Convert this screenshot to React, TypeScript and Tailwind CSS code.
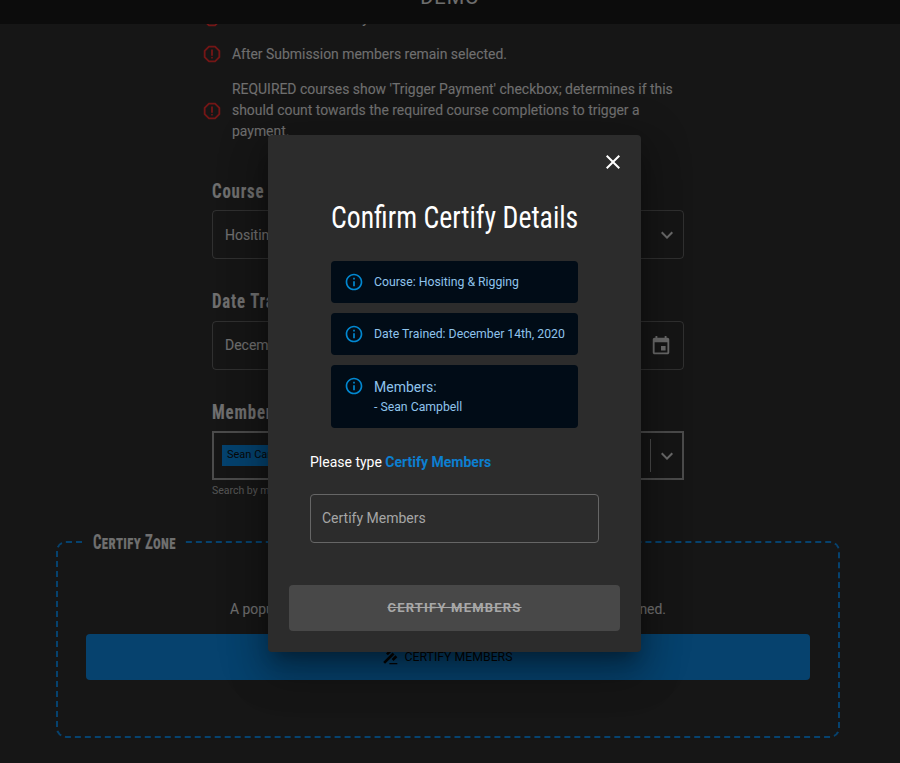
import React from "react";

const ROBOTO = "font-['Roboto',sans-serif]";
const CONDENSED = "font-['Liberation_Sans_Narrow','Roboto_Condensed','Liberation_Sans',sans-serif]";

function Icon({ d, className, children }: { d?: string; className?: string; children?: React.ReactNode }) {
  return (
    <svg viewBox="0 0 24 24" fill="currentColor" className={className}>
      {d && <path d={d} />}
      {children}
    </svg>
  );
}

const CHEVRON = "M16.59 8.59L12 13.17 7.41 8.59 6 10l6 6 6-6z";
const INFO =
  "M11 7h2v2h-2zm0 4h2v6h-2zm1-9C6.48 2 2 6.48 2 12s4.48 10 10 10 10-4.48 10-10S17.52 2 12 2zm0 18c-4.41 0-8-3.59-8-8s3.59-8 8-8 8 3.59 8 8-3.59 8-8 8z";

function ReportIcon() {
  return (
    <Icon className="w-[22px] h-[22px] shrink-0 text-[#e82c2c]">
      <path d="M15.73 3H8.27L3 8.27v7.46L8.27 21h7.46L21 15.73V8.27L15.73 3zM19 14.9L14.9 19H9.1L5 14.9V9.1L9.1 5h5.8L19 9.1v5.8z" />
      <circle cx="12" cy="16" r="1" />
      <path d="M11 7h2v7h-2z" />
    </Icon>
  );
}

function Note({ children }: { children: React.ReactNode }) {
  return (
    <div className="flex items-center gap-[9px] -ml-[11px]">
      <ReportIcon />
      <p className="text-[13.93px] leading-[21px] text-[#fff]/85">{children}</p>
    </div>
  );
}

function FieldLabel({ children }: { children: React.ReactNode }) {
  return (
    <h3 className={`${CONDENSED} origin-left scale-x-[0.84] text-[20px] leading-[24px] font-bold tracking-[1px] text-white/85`}>
      {children}
    </h3>
  );
}

function InfoBox({ children, start }: { children: React.ReactNode; start?: boolean }) {
  return (
    <div className={`flex ${start ? "items-start py-[12px] h-[63px]" : "items-center h-[42px]"} gap-[10px] pl-[13px] rounded-[4px] bg-[#010c17] text-[#8fc3ec] text-[12.25px]`}>
      <Icon d={INFO} className={`w-[20px] h-[20px] shrink-0 text-[#0288d1] ${start ? "-mt-px" : ""}`} />
      <div className="min-w-0">{children}</div>
    </div>
  );
}

export default function App() {
  return (
    <div className={`${ROBOTO} relative h-[763px] w-[900px] overflow-hidden bg-[#2c2c2c]`}>
      {/* top bar, page is scrolled so only the bottom shows */}
      <div className="absolute z-10 top-0 inset-x-0 h-[24px] overflow-hidden bg-[#181818]">
        <div className="-mt-[15px] text-center text-[20px] leading-[24px] tracking-[1px] text-white/85">DEMO</div>
      </div>

      <main className="flex flex-col">
        <div className="ml-[212px] w-[472px] flex flex-col">
          <div className="flex flex-col gap-[14px] pt-[7px]">
            <Note>Members are listed by last name.</Note>
            <Note>After Submission members remain selected.</Note>
            <Note>
              REQUIRED courses show 'Trigger Payment' checkbox; determines if this should count towards the required
              course completions to trigger a payment.
            </Note>
          </div>

          <div className="mt-[37px]">
            <FieldLabel>Course</FieldLabel>
            <div className="mt-[7px] h-[49px] flex items-center justify-between pl-[12px] pr-[4px] pt-px rounded-[4px] border border-white/25 text-white/85 text-[14px]">
              <span>Hositing &amp; Rigging</span>
              <Icon d={CHEVRON} className="w-[24px] h-[24px] text-white/80" />
            </div>
          </div>

          <div className="mt-[30px]">
            <FieldLabel>Date Trained</FieldLabel>
            <div className="mt-[8px] h-[49px] flex items-center justify-between pl-[12px] pr-[11px] rounded-[4px] border border-white/25 text-white/85 text-[14px]">
              <span>December 14th, 2020</span>
              <Icon d="M17 12h-5v5h5v-5zM16 1v2H8V1H6v2H5c-1.11 0-1.99.9-1.99 2L3 19c0 1.1.89 2 2 2h14c1.1 0 2-.9 2-2V5c0-1.1-.9-2-2-2h-1V1h-2zm3 18H5V8h14v11z" className="w-[22px] h-[22px] text-white/80" />
            </div>
          </div>

          <div className="mt-[30px]">
            <FieldLabel>Members</FieldLabel>
            <div className="mt-[7px] h-[49px] flex items-center justify-between pl-[8px] pr-[3px] border-2 border-white/50 text-[11px]">
              <span className="h-[21px] flex items-center px-[5px] bg-[#0a84dc] text-[#111]">Sean Campbell</span>
              <div className="flex items-center gap-[4px]">
                <div className="w-px h-[33px] bg-white/50" />
                <Icon d={CHEVRON} className="w-[24px] h-[24px] text-white/80" />
              </div>
            </div>
            <p className="mt-[4px] text-[10.5px] leading-[14px] text-white/60">Search by member name</p>
          </div>
        </div>

        <fieldset className="mt-[34px] mx-[56px] w-[784px] h-[206px] px-[28px] rounded-[10px] border-2 border-dashed border-[#0d84dc]">
          <legend className={`${CONDENSED} w-[96px] px-[7px] text-[20px] leading-[20px] font-bold tracking-[0.5px] whitespace-nowrap text-white/85 [font-variant:small-caps]`}>
            <span className="inline-block origin-left scale-x-[0.74]">Certify Zone</span>
          </legend>
          <p className="mt-[47px] text-center text-[13.93px] leading-[21px] text-white/85">
            A popup will appear to confirm the details of members being assigned.
          </p>
          <button className="mt-[14px] w-full h-[46px] flex items-center justify-center gap-[7px] rounded-[4px] bg-[#0d84dc] text-[#0a0a0a] text-[12.3px]">
            <Icon d="M1 21h12v2H1zM5.245 8.07l2.83-2.827 14.14 14.142-2.828 2.828zM12.317 1l5.657 5.656-2.83 2.83-5.654-5.66zM3.825 9.485l5.657 5.657-2.828 2.828-5.657-5.657z" className="w-[16px] h-[16px] -ml-[2px] -scale-x-100" />
            CERTIFY MEMBERS
          </button>
        </fieldset>
      </main>

      {/* dim layer */}
      <div className="absolute z-20 inset-0 bg-black/50" />

      {/* modal */}
      <div className="absolute z-30 left-[268px] top-[135px] w-[373px] h-[517px] flex flex-col rounded-[4px] bg-[#2c2c2c] shadow-[0_11px_15px_-7px_rgba(0,0,0,0.3),0_24px_38px_3px_rgba(0,0,0,0.21),0_9px_46px_8px_rgba(0,0,0,0.18)]">
        <div className="flex justify-end pt-[15px] pr-[16px]">
          <Icon d="M19 6.41L17.59 5 12 10.59 6.41 5 5 6.41 10.59 12 5 17.59 6.41 19 12 13.41 17.59 19 19 17.59 13.41 12z" className="w-[24px] h-[24px] text-white" />
        </div>
        <h2 className={`${CONDENSED} mt-[23px] ml-[63px] origin-left scale-x-[0.867] text-[32px] leading-[40px] text-white whitespace-nowrap`}>
          Confirm Certify Details
        </h2>

        <div className="mt-[24px] mx-[63px] flex flex-col gap-[10px]">
          <InfoBox>Course: Hositing &amp; Rigging</InfoBox>
          <InfoBox>Date Trained: December 14th, 2020</InfoBox>
          <InfoBox start>
            <div className="text-[14px] leading-[20px]">Members:</div>
            <div className="leading-[20px]">- Sean Campbell</div>
          </InfoBox>
        </div>

        <p className="mt-[24px] ml-[42px] text-[14px] leading-[21px] text-white">
          Please type <span className="font-bold text-[#0c7fd0]">Certify Members</span>
        </p>

        <div className="mt-[21px] mx-[42px] h-[49px] flex items-center px-[11px] rounded-[4px] border border-[#666666] text-[14px] text-[#a6a6a6]">
          Certify Members
        </div>

        <button className="mt-[42px] mx-[21px] h-[46px] flex items-center justify-center rounded-[4px] bg-[#484848] text-[13px] font-bold tracking-[1.2px] text-[#a8a8a8] line-through">
          CERTIFY MEMBERS
        </button>
      </div>
    </div>
  );
}
